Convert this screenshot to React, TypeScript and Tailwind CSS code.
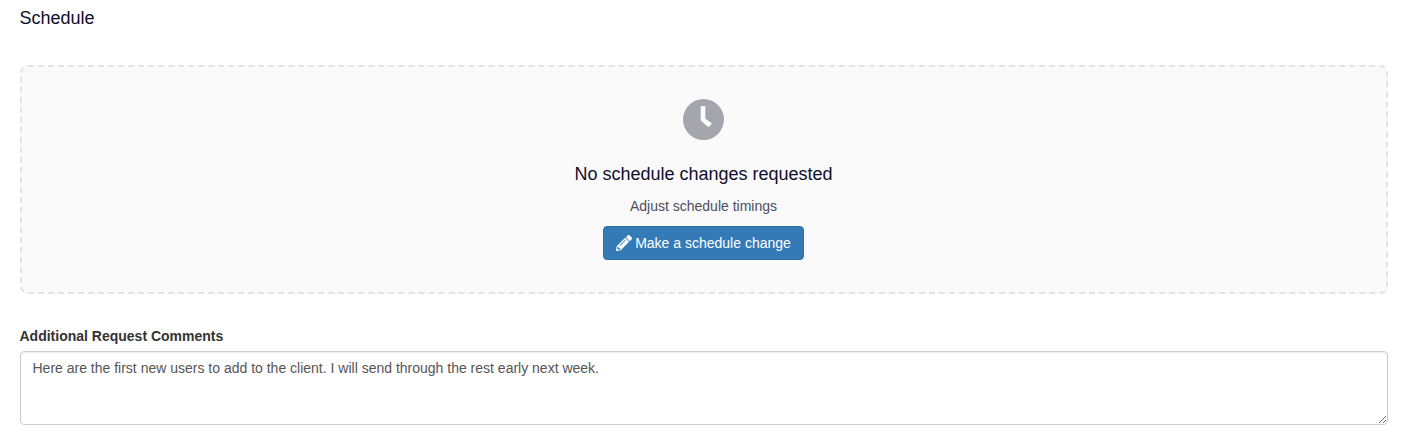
import { FaPencilAlt } from "react-icons/fa";

export default function App() {
  return (
    <div className="w-[1408px] h-[435px] bg-white overflow-hidden px-5 font-['Liberation_Sans',Arial,sans-serif] text-[14px] text-[#333333]">
      <h4 className="h-[65px] pt-[8px] -ml-[0.5px] text-[18px] leading-[20px] font-normal text-[#0f0f2d]">Schedule</h4>
      <div className="h-[229px] bg-[#fafafa] border-2 border-dashed border-[#e3e4e6] rounded-[8px] flex flex-col items-center pt-[32px]">
        <svg width="41" height="41" viewBox="0 0 41 41" className="block mr-[2px]">
          <circle cx="20.5" cy="20.5" r="20.5" fill="#a5a5ae" />
          <path d="M18.2 7.5H21.8V19.8L28.4 24.6L25.6 27.7L18.2 21.4Z" fill="#ffffff" stroke="#ffffff" strokeWidth="1" strokeLinejoin="round" />
        </svg>
        <div className="mt-[24px] mr-[1px] text-[18px] leading-[20px] text-[#0f0f2d]">No schedule changes requested</div>
        <p className="mt-[12px] mr-[1px] leading-[20px] text-[#4d4d5c]">Adjust schedule timings</p>
        <button className="mt-[10px] mr-[1px] h-[34px] pl-[12px] pr-[12px] bg-[#337ab7] border border-[#2e6da4] rounded-[4px] text-white text-[14px] leading-[20px] flex items-center gap-[3px]">
          <FaPencilAlt size={16} color="#ffffff" />
          Make a schedule change
        </button>
      </div>
      <label className="block mt-[32px] h-[25px] -ml-[0.5px] text-[14px] leading-[20px] font-bold text-[#333333]">Additional Request Comments</label>
      <textarea
        readOnly
        className="block w-full h-[74px] py-[6px] pl-[11.5px] pr-[12px] border border-[#cccccc] rounded-[4px] bg-white text-[14px] leading-[20px] text-[#555555] shadow-[inset_0_1px_1px_rgba(0,0,0,0.075)] outline-none"
        defaultValue="Here are the first new users to add to the client. I will send through the rest early next week."
      />
    </div>
  );
}
